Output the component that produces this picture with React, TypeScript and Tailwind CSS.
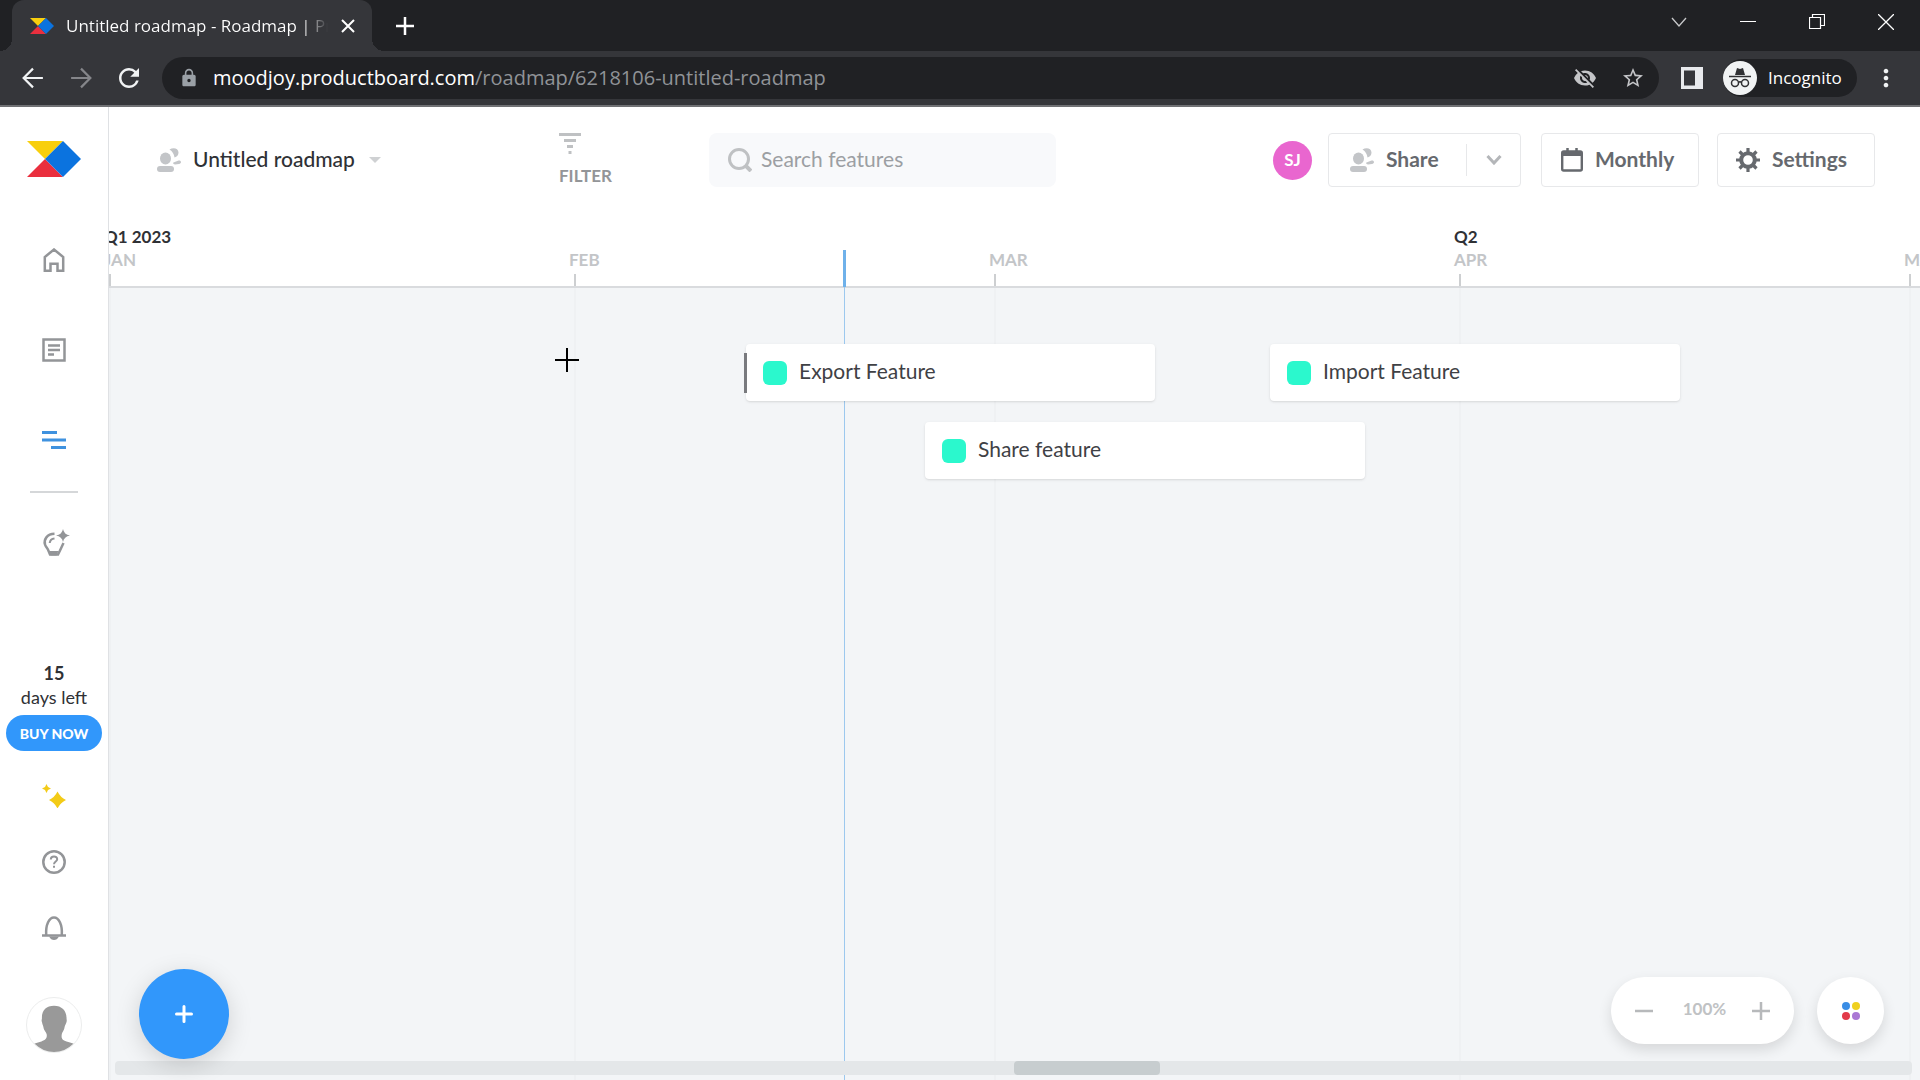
import React from 'react';
import { MdLock, MdVisibilityOff, MdStarBorder, MdMoreVert, MdRefresh } from 'react-icons/md';

type Month = {
  label: string;
  quarter?: string;
  width: string;
};

type Feature = {
  title: string;
  position: string;
  handle?: boolean;
};

const months: Month[] = [
  { label: 'JAN', quarter: 'Q1 2023', width: 'w-[465px]' },
  { label: 'FEB', width: 'w-[420px]' },
  { label: 'MAR', width: 'w-[465px]' },
  { label: 'APR', quarter: 'Q2', width: 'w-[450px]' },
  { label: 'MAY', width: 'w-[465px]' }
];

const lanes: Feature[][] = [
  [
    { title: 'Export Feature', position: 'ml-[637px] w-[409px]', handle: true },
    { title: 'Import Feature', position: 'ml-[115px] w-[410px]' }
  ],
  [{ title: 'Share feature', position: 'ml-[816px] w-[440px]' }]
];

function Logo({ className }: { className: string }) {
  return (
    <svg viewBox="0 0 54 36" className={className} aria-hidden="true">
      <path d="M0 0h36L18 18z" fill="#f8cf0d" />
      <path d="M0 36h36L18 18z" fill="#ea2f3e" />
      <path d="M36 0l18 18-18 18-18-18z" fill="#0b73df" />
    </svg>
  );
}

function PeopleIcon() {
  return (
    <svg viewBox="0 0 24 24" className="size-6 shrink-0" fill="#c3c5c8" aria-hidden="true">
      <ellipse cx="8.5" cy="10.5" rx="5.5" ry="6" />
      <rect x="0" y="18" width="17" height="6" rx="3" />
      <path d="M12.5 1.5C16 -1 21.500 0 21.500 4.500c0 2.500-1.500 4.500-4 5C17 6 15.500 3.500 12.500 1.500z" />
      <path d="M16.500 14.500l5-2c3-.5 3.500 3 .5 3.500l-4 .5c-1.500 0-2.500-1.500-1.500-2z" />
    </svg>
  );
}

function BrowserChrome() {
  return (
    <div className="shrink-0 bg-[#202124] font-['Open_Sans','Noto_Sans',sans-serif] text-white">
      <div className="flex h-[51px] items-stretch pl-3">
        <div className="relative flex w-[360px] items-center rounded-t-xl bg-[#35363a] pl-[18px] pr-4">
          <span className="absolute bottom-0 -left-3 size-3 bg-[radial-gradient(circle_at_0_0,#202124_12px,#35363a_12px)]" />
          <span className="absolute bottom-0 -right-3 size-3 bg-[radial-gradient(circle_at_100%_0,#202124_12px,#35363a_12px)]" />
          <Logo className="h-4 w-6 shrink-0" />
          <span className="ml-3 w-[262px] overflow-hidden whitespace-nowrap bg-linear-to-r from-white from-90% to-transparent bg-clip-text text-[17px] text-transparent">
            Untitled roadmap - Roadmap | Productboard
          </span>
          <button aria-label="Close tab" className="ml-[13px]">
            <svg viewBox="0 0 14 14" className="size-[14px]" stroke="white" strokeWidth="2">
              <path d="M1 1l12 12M13 1L1 13" />
            </svg>
          </button>
        </div>
        <button aria-label="New tab" className="ml-6">
          <svg viewBox="0 0 18 18" className="size-[18px]" stroke="white" strokeWidth="2.500">
            <path d="M9 0v18M0 9h18" />
          </svg>
        </button>
        <div className="ml-auto flex items-start gap-[53px] pr-[26px] pt-[14px]">
          <button aria-label="Search tabs">
            <svg viewBox="0 0 16 16" className="size-4" fill="none" stroke="#c8c9cb" strokeWidth="1.300">
              <path d="M1 4l7 8 7-8" />
            </svg>
          </button>
          <button aria-label="Minimize">
            <svg viewBox="0 0 16 16" className="size-4" stroke="white">
              <path d="M0 7.500h16" />
            </svg>
          </button>
          <button aria-label="Restore">
            <svg viewBox="0 0 16 16" className="size-4" fill="none" stroke="white" strokeWidth="1.200">
              <path d="M.5 3.500h11v11H.5zM3.500 3.500v-3h12v11h-4" />
            </svg>
          </button>
          <button aria-label="Close window">
            <svg viewBox="0 0 16 16" className="size-4" stroke="white" strokeWidth="1.300">
              <path d="M0 0l16 16M16 0L0 16" />
            </svg>
          </button>
        </div>
      </div>

      <div className="flex h-14 items-center border-b-2 border-[#707174] bg-[#35363a] pl-[22px] pr-5">
        <button aria-label="Back">
          <svg viewBox="0 0 20 20" className="size-[22px]" fill="none" stroke="#f1f3f4" strokeWidth="2">
            <path d="M10 1.500L1.500 10l8.500 8.500M1.500 10H19" />
          </svg>
        </button>
        <button aria-label="Forward" className="ml-[26px]">
          <svg viewBox="0 0 20 20" className="size-[22px]" fill="none" stroke="#85868a" strokeWidth="2">
            <path d="M10 1.500l8.500 8.500-8.500 8.500M18.500 10H1" />
          </svg>
        </button>
        <button aria-label="Reload" className="ml-[22px]">
          <MdRefresh className="size-[30px] text-[#f1f3f4]" />
        </button>
        <div className="ml-[18px] flex h-[42px] min-w-0 flex-1 items-center rounded-full bg-[#202124] pl-[17px] pr-[14px]">
          <MdLock className="size-5 shrink-0 text-[#9aa0a6]" />
          <div className="ml-[14px] flex-1 truncate text-[20px] text-[#909397]">
            <span className="text-white">moodjoy.productboard.com</span>/roadmap/6218106-untitled-roadmap
          </div>
          <button aria-label="Third-party cookies blocked">
            <MdVisibilityOff className="size-6 text-[#c4c5c8]" />
          </button>
          <button aria-label="Bookmark this tab" className="ml-6">
            <MdStarBorder className="size-6 text-[#c4c5c8]" />
          </button>
        </div>
        <button aria-label="Side panel" className="ml-[22px]">
          <svg viewBox="0 0 22 22" className="size-[22px]">
            <path d="M0 0h22v22H0z" fill="#e8eaed" />
            <path d="M3 3.500h11v15H3z" fill="#35363a" />
          </svg>
        </button>
        <button className="ml-5 flex h-[38px] w-[134px] items-center rounded-full bg-[#202124] text-[17px]">
          <svg viewBox="0 0 34 34" className="size-[34px]" fill="none" stroke="#303134">
            <circle cx="17" cy="17" r="17" fill="#f1f3f4" stroke="none" />
            <path d="M12 14l2-7 3 1 3-1 2 7z" fill="#303134" stroke="none" />
            <path d="M6 15.500h22" strokeWidth="1.500" />
            <circle cx="12" cy="22" r="3.500" strokeWidth="1.500" />
            <circle cx="22" cy="22" r="3.500" strokeWidth="1.500" />
            <path d="M15.500 21.500q1.500-1.500 3 0" strokeWidth="1.500" />
          </svg>
          <span className="ml-[11px]">Incognito</span>
        </button>
        <button aria-label="Chrome menu" className="ml-[15px]">
          <MdMoreVert className="size-[28px] text-[#f1f3f4]" />
        </button>
      </div>
    </div>
  );
}

function Sidebar() {
  const item = 'flex h-[66px] w-full items-center justify-center';

  return (
    <aside className="flex w-[109px] shrink-0 flex-col items-center border-r border-[#dfe1e4] bg-white">
      <a href="#" aria-label="Productboard" className="mt-[34px] mb-[38px]">
        <Logo className="h-9 w-[54px]" />
      </a>
      <nav className="flex w-full flex-col items-center">
        <a href="#" aria-label="Home" className="flex h-[90px] w-full items-center justify-center">
          <svg viewBox="0 0 24 24" className="size-6" fill="none" stroke="#939598" strokeWidth="2.500">
            <path d="M2.800 22.700V9L12 1.500 21.200 9v13.700H15.500v-7h-7v7z" />
          </svg>
        </a>
        <a href="#" aria-label="Features" className="flex h-[90px] w-full items-center justify-center">
          <svg viewBox="0 0 24 24" className="size-6" fill="none" stroke="#939598" strokeWidth="2.500">
            <path d="M1.500 1.500h21v21h-21zM6 7.500h12M6 12h12M6 16.500h6" />
          </svg>
        </a>
        <a href="#" aria-label="Roadmap" className="flex h-[90px] w-full items-center justify-center">
          <svg viewBox="0 0 24 24" className="size-6" fill="none" stroke="#3f92df" strokeWidth="3">
            <path d="M0 4.500h15M0 12h24M9 19.500h15" />
          </svg>
        </a>
        <hr className="mt-[6px] w-12 border-t-2 border-[#d5d7d9]" />
        <a href="#" aria-label="Insights" className="mt-9 flex w-full justify-center">
          <svg viewBox="0 0 28 28" className="ml-1 size-7" fill="none" stroke="#939598" strokeWidth="2.500">
            <path d="M12.500 4.800C5 5 1.500 10.500 3 15.500c.8 2.800 3 4 3.500 6.500l1.500 3.500h8l2-4 3.500-7.500" />
            <path d="M12.500 9.500c-3 .3-4.500 2-4.800 4.500" strokeWidth="2" />
            <path d="M21 0q1 5.500 7 6.500-6 1-7 6.500-1-5.500-7-6.500 6-1 7-6.500z" fill="#939598" stroke="none" />
            <path d="M7 22h9.500l-2 4.500h-6z" fill="#939598" stroke="none" />
          </svg>
        </a>
      </nav>

      <div className="mt-auto text-center text-[18px] leading-6 text-[#2f3135]">
        <p className="font-bold">15</p>
        <p>days left</p>
      </div>
      <button className="mt-[6px] h-9 w-24 rounded-full bg-[#3197fb] text-[14px] font-black text-white">
        BUY NOW
      </button>
      <div className="mt-3 w-full">
        <button aria-label="What's new" className={item}>
          <svg viewBox="0 0 24 24" className="size-6" fill="#f3cb17">
            <path d="M4.500 0L6 3l3 1.500L6 6 4.500 9 3 6 0 4.500 3 3zM15.500 7.500q3 6 8.500 8.500-5.500 2.500-8.500 8.500-3-6-8.500-8.500 5.500-2.500 8.500-8.500z" />
          </svg>
        </button>
        <button aria-label="Help" className={item}>
          <svg viewBox="0 0 24 24" className="size-6" fill="none" stroke="#939598" strokeWidth="2.500">
            <circle cx="12" cy="12" r="10.700" />
            <path d="M8.800 9.500c0-4 6.400-4 6.400-.3 0 2.300-3.200 2.300-3.200 5" strokeWidth="2" />
            <path d="M12 15.800v2" strokeWidth="2" />
          </svg>
        </button>
        <button aria-label="Notifications" className={item}>
          <svg viewBox="0 0 24 24" className="size-6" fill="none" stroke="#939598" strokeWidth="2.500">
            <path d="M4.200 19C3.500 9 7 1.500 12 1.500S20.500 9 19.800 19" />
            <path d="M0 19.500h24" />
            <path d="M7 20.500h10q-2 3.500-5 3.500t-5-3.500z" fill="#939598" stroke="none" />
          </svg>
        </button>
      </div>
      <button aria-label="Your profile" className="mt-9 mb-[27px] size-14 overflow-hidden rounded-full border border-[#eceded] bg-white">
        <svg viewBox="0 0 56 56" className="size-full" fill="#999">
          <path d="M28 8c-8 0-13 5-12.500 13 0 1-.8 2 0 4 .3 2 1 3 1.500 5 .5 4 3 5 3.500 8 .3 4-1 5.500-5.500 7-5 1.500-9 2.500-12.500 5v8h51v-8c-3.500-2.500-7.500-3.500-12.500-5-4.500-1.500-5.500-3-5-7 .5-3 2.500-4 3-8 .5-2 1.500-3 2-5 .5-2 0-3 0-4C41 13 36 8 28 8z" />
        </svg>
      </button>
    </aside>
  );
}

function Toolbar() {
  const button =
    'flex h-[54px] items-center rounded-sm border border-[#e7e8ea] bg-white text-[21px] font-bold text-[#66696e]';

  return (
    <header className="flex h-[106px] items-center pl-12 pr-[45px]">
      <div className="w-[402px] shrink-0">
        <button className="flex items-center text-[21px] font-medium text-[#2f3135]">
          <PeopleIcon />
          <span className="ml-3 pb-[3px]">Untitled roadmap</span>
          <svg viewBox="0 0 12 6" className="ml-[14px] h-[6px] w-3" fill="#cfd1d3">
            <path d="M0 0h12L6 6z" />
          </svg>
        </button>
      </div>
      <div className="w-[150px] shrink-0">
        <button className="flex flex-col items-start gap-2 text-[17px] leading-6 font-bold text-[#939598]">
          <svg viewBox="0 0 22 24" className="h-6 w-[22px]" stroke="#bfc1c3" strokeWidth="3">
            <path d="M0 2.500h22M5 8.500h12M8 14.500h6M9.500 20.500h3" />
          </svg>
          FILTER
        </button>
      </div>
      <label className="flex h-[54px] w-[347px] items-center rounded-lg bg-[#f8f9fb] pl-[19px]">
        <svg viewBox="0 0 24 24" className="size-6 shrink-0" fill="none" stroke="#bfc1c3" strokeWidth="3">
          <circle cx="11" cy="11" r="9.500" />
          <path d="M17 17l6 6" strokeWidth="4" />
        </svg>
        <input
          type="search"
          aria-label="Search features"
          placeholder="Search features"
          className="ml-[9px] min-w-0 flex-1 bg-transparent pb-[3px] text-[21px] outline-none placeholder:text-[#9c9fa3]"
        />
      </label>

      <div className="ml-auto flex shrink-0 items-center">
        <span className="mr-4 flex size-[39px] items-center justify-center rounded-full bg-[#e966cf] text-[17px] font-bold text-white">
          SJ
        </span>
        <div className={`${button} mr-5 w-[193px]`}>
          <button className="flex h-full flex-1 items-center gap-3 pl-[21px]">
            <PeopleIcon />
            <span className="pb-[3px]">Share</span>
          </button>
          <button aria-label="Share options" className="flex h-8 w-[54px] items-center justify-center border-l border-[#e7e8ea]">
            <svg viewBox="0 0 16 10" className="h-[10px] w-4" fill="none" stroke="#b4b6b9" strokeWidth="3">
              <path d="M1.500 1l6.500 7 6.500-7" />
            </svg>
          </button>
        </div>
        <button className={`${button} mr-[18px] w-[158px] gap-3 pl-[19px]`}>
          <svg viewBox="0 0 22 24" className="h-6 w-[22px]" fill="none" stroke="#66696e">
            <rect x="1.200" y="3.500" width="19.600" height="19" rx="1.500" strokeWidth="2.400" />
            <path d="M1 5.500h20" strokeWidth="5" />
            <path d="M6.500 0v5M15.500 0v5" strokeWidth="2.500" />
          </svg>
          <span className="pb-[3px]">Monthly</span>
        </button>
        <button className={`${button} w-[158px] gap-3 pl-[18px]`}>
          <svg viewBox="0 0 24 24" className="size-6" fill="none" stroke="#66696e">
            <circle cx="12" cy="12" r="6.800" strokeWidth="4" />
            <path
              d="M12 0v4M12 20v4M0 12h4M20 12h4M3.500 3.500l3 3M17.500 17.500l3 3M20.500 3.500l-3 3M6.500 17.500l-3 3"
              strokeWidth="3.200"
            />
          </svg>
          <span className="pb-[3px]">Settings</span>
        </button>
      </div>
    </header>
  );
}

function FeatureCard({ feature }: { feature: Feature }) {
  return (
    <article
      className={`relative flex h-[57px] shrink-0 items-center rounded-sm bg-white pl-[17px] text-[21px] text-[#3f4145] shadow-sm ${feature.position}`}
    >
      {feature.handle && <span className="absolute top-[9px] -left-[2px] h-10 w-[3px] bg-[#797a7e]" />}
      <span className="size-6 shrink-0 rounded-md bg-[#2bf8cd]" />
      <span className="ml-3 pb-[3px]">{feature.title}</span>
    </article>
  );
}

function Timeline() {
  return (
    <section className="relative flex min-h-0 flex-1 flex-col overflow-hidden bg-[#f3f5f7]">
      <div className="flex h-[75px] shrink-0 overflow-hidden border-b-2 border-[#d9dbde] bg-white">
        {months.map((month) => (
          <div key={month.label} className={`flex shrink-0 flex-col justify-end leading-[23px] font-bold ${month.width}`}>
            <span className="-ml-[5px] text-[17px] text-[#2f3135]">{month.quarter}</span>
            <span className="-ml-[5px] text-[17px] text-[#c3c5c8]">{month.label}</span>
            <span className="mt-[3px] h-3 w-[2px] bg-[#cdcfd1]" />
          </div>
        ))}
      </div>

      {/* month separators and the today marker sit behind the cards */}
      <div className="absolute top-[75px] bottom-0 left-0 flex">
        {months.map((month) => (
          <div key={month.label} className={`shrink-0 border-l-2 border-[#eff1f3] ${month.width}`} />
        ))}
      </div>
      <div className="absolute top-[37px] bottom-0 left-[734px] flex w-[3px] flex-col items-center">
        <span className="h-[37px] w-[3px] bg-[#6fb1ea]" />
        <span className="w-px flex-1 bg-[#9cc8ee]" />
      </div>

      <div className="relative flex flex-1 flex-col gap-[21px] pt-14">
        {lanes.map((lane, index) => (
          <div key={index} className="flex">
            {lane.map((feature) => (
              <FeatureCard key={feature.title} feature={feature} />
            ))}
          </div>
        ))}
      </div>

      <svg viewBox="0 0 24 24" className="absolute top-[135px] left-[446px] size-6" stroke="black" strokeWidth="2">
        <path d="M12 0v24M0 12h24" />
      </svg>

      <button
        aria-label="Add feature"
        className="absolute bottom-[21px] left-[30px] z-10 flex size-[90px] items-center justify-center rounded-full bg-[#3197fb] shadow-[0_6px_24px_rgba(0,0,0,0.15)]"
      >
        <svg viewBox="0 0 18 18" className="size-[18px]" stroke="white" strokeWidth="3" strokeLinecap="round">
          <path d="M9 1.500v15M1.500 9h15" />
        </svg>
      </button>

      <div className="absolute right-9 bottom-9 flex gap-[23px] text-[17px] font-bold text-[#c0c2c4]">
        <div className="flex h-[67px] w-[183px] items-center justify-between rounded-full bg-white px-6 shadow-[0_6px_14px_rgba(0,0,0,0.12)]">
          <button aria-label="Zoom out">
            <svg viewBox="0 0 18 18" className="size-[18px]" stroke="#b7b9bb" strokeWidth="2.500">
              <path d="M0 9h18" />
            </svg>
          </button>
          <span className="ml-1 pb-[3px]">100%</span>
          <button aria-label="Zoom in">
            <svg viewBox="0 0 18 18" className="size-[18px]" stroke="#b7b9bb" strokeWidth="2.500">
              <path d="M9 0v18M0 9h18" />
            </svg>
          </button>
        </div>
        <button
          aria-label="Color legend"
          className="flex size-[67px] items-center justify-center rounded-full bg-white shadow-[0_6px_14px_rgba(0,0,0,0.12)]"
        >
          <svg viewBox="0 0 18 18" className="size-[18px]">
            <circle cx="4" cy="4" r="4" fill="#3a8de5" />
            <circle cx="14" cy="4" r="4" fill="#efd01f" />
            <circle cx="4" cy="14" r="4" fill="#e23a49" />
            <circle cx="14" cy="14" r="4" fill="#aa78d5" />
          </svg>
        </button>
      </div>

      <div className="relative mr-2 mb-[5px] ml-[6px] h-[14px] shrink-0 rounded-sm bg-[#e4e7e9]">
        <div className="ml-[50%] h-full w-[146px] rounded-sm bg-[#c7cdcf]" />
      </div>
    </section>
  );
}

export default function App() {
  return (
    <div className="flex h-screen flex-col overflow-hidden bg-white font-[Lato,sans-serif]">
      <BrowserChrome />
      <div className="flex min-h-0 flex-1">
        <Sidebar />
        <main className="flex min-w-0 flex-1 flex-col">
          <Toolbar />
          <Timeline />
        </main>
      </div>
    </div>
  );
}
